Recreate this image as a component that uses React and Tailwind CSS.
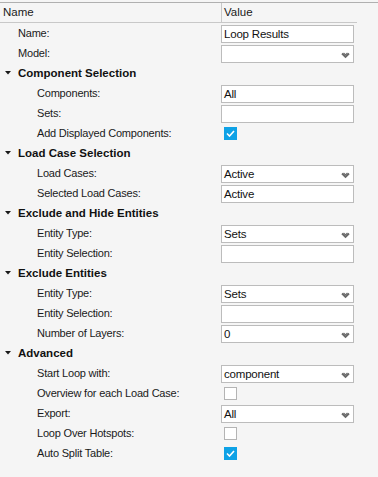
import React from "react";

const Chevron = () => (
  <svg width="9" height="7" viewBox="0 0 9 7" className="absolute right-[3px] top-[6px]">
    <path d="M1 1.5 L4.5 5 L8 1.5" fill="none" stroke="#6a6a6a" strokeWidth="1.8" />
    <path d="M2.5 1 L4.5 3 L6.5 1" fill="none" stroke="#6a6a6a" strokeWidth="1.2" />
  </svg>
);

const TextBox = ({ value = "" }) => (
  <div className="relative mt-[1px] h-[18px] w-[133px] border border-[#bcbcbc] bg-white pl-[2px] text-[11.5px] leading-[16px] tracking-[-0.2px] text-[#111]">
    {value}
  </div>
);

const Select = ({ value = "" }) => (
  <div className="relative mt-[1px] h-[18px] w-[133px] border border-[#bcbcbc] bg-white pl-[2px] text-[11.5px] leading-[16px] tracking-[-0.2px] text-[#111]">
    {value}
    <Chevron />
  </div>
);

const Check = ({ checked }) =>
  checked ? (
    <div className="ml-[3px] mt-[1px] flex h-[13px] w-[13px] items-center justify-center bg-[#0ea2e6]">
      <svg width="9" height="7" viewBox="0 0 9 7">
        <path d="M1 3.5 L3.5 6 L8 1" fill="none" stroke="white" strokeWidth="1.6" />
      </svg>
    </div>
  ) : (
    <div className="ml-[3px] mt-[1px] h-[13px] w-[13px] border border-[#b4b4b4] bg-white" />
  );

const Row = ({ label, indent, children }) => (
  <div className="flex h-[20px] items-start">
    <div
      className={`w-[221px] shrink-0 text-[11px] leading-[20px] tracking-[-0.2px] text-[#1a1a1a] ${
        indent === 2 ? "pl-[37px]" : "pl-[18px]"
      }`}
    >
      {label}
    </div>
    <div className="flex h-[20px] items-center">{children}</div>
  </div>
);

const Section = ({ title }) => (
  <div className="flex h-[20px] items-center">
    <div className="flex w-[18px] justify-center">
      <svg width="6" height="4" viewBox="0 0 6 4" className="mr-[3px]">
        <path d="M0 0 L6 0 L3 3.5 Z" fill="#1a1a1a" />
      </svg>
    </div>
    <div className="text-[11.5px] font-bold leading-[20px] text-[#111]">{title}</div>
  </div>
);

export default function App() {
  return (
    <div
      className="h-[477px] w-[378px] overflow-hidden bg-[#f5f5f5]"
      style={{ fontFamily: '"Liberation Sans", Arial, sans-serif' }}
    >
      <div className="h-[2px]" />
      <div className="border-t border-[#b0b0b0]">
        <div className="flex h-[20px] w-[357px] border-b border-[#c8c8c8]">
          <div className="w-[221px] pl-[3px] text-[11.5px] leading-[19px] text-[#1a1a1a]">Name</div>
          <div className="border-l border-[#c8c8c8] pl-[2px] text-[11.5px] leading-[19px] text-[#1a1a1a]">
            Value
          </div>
        </div>
      </div>
      <Row label="Name:"><TextBox value="Loop Results" /></Row>
      <Row label="Model:"><Select /></Row>
      <Section title="Component Selection" />
      <Row label="Components:" indent={2}><TextBox value="All" /></Row>
      <Row label="Sets:" indent={2}><TextBox /></Row>
      <Row label="Add Displayed Components:" indent={2}><Check checked /></Row>
      <Section title="Load Case Selection" />
      <Row label="Load Cases:" indent={2}><Select value="Active" /></Row>
      <Row label="Selected Load Cases:" indent={2}><TextBox value="Active" /></Row>
      <Section title="Exclude and Hide Entities" />
      <Row label="Entity Type:" indent={2}><Select value="Sets" /></Row>
      <Row label="Entity Selection:" indent={2}><TextBox /></Row>
      <Section title="Exclude Entities" />
      <Row label="Entity Type:" indent={2}><Select value="Sets" /></Row>
      <Row label="Entity Selection:" indent={2}><TextBox /></Row>
      <Row label="Number of Layers:" indent={2}><Select value="0" /></Row>
      <Section title="Advanced" />
      <Row label="Start Loop with:" indent={2}><Select value="component" /></Row>
      <Row label="Overview for each Load Case:" indent={2}><Check /></Row>
      <Row label="Export:" indent={2}><Select value="All" /></Row>
      <Row label="Loop Over Hotspots:" indent={2}><Check /></Row>
      <Row label="Auto Split Table:" indent={2}><Check checked /></Row>
    </div>
  );
}
